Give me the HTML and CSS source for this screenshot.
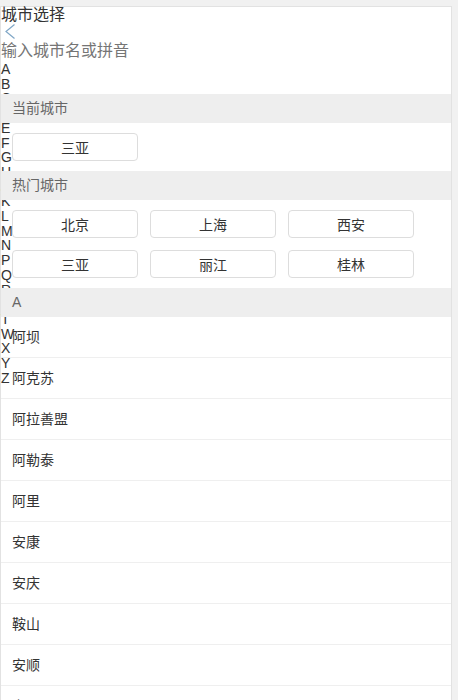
FILE: index.html
```html
<!DOCTYPE html>
<html lang="zh-CN">
<head>
  <meta charset="UTF-8">
  <title>城市选择</title>
  <link rel="stylesheet" href="styles.css">
</head>
<body>
  <div class="page">
    <div class="top">
      <div class="title">城市选择</div>
      <a class="back" href="#">
        <svg width="16" height="17" viewBox="0 0 16 17">
          <polyline points="13.5,1.5 5,8.5 13.5,15.5" fill="none" stroke="#7fa6c6" stroke-width="1.2"/>
        </svg>
      </a>
      <input class="search" type="text" placeholder="输入城市名或拼音">

      <!-- letter index -->
      <ul class="index">
        <li>A</li><li>B</li><li>C</li><li>D</li><li>E</li><li>F</li><li>G</li>
        <li>H</li><li>J</li><li>K</li><li>L</li><li>M</li><li>N</li><li>P</li>
        <li>Q</li><li>R</li><li>S</li><li>T</li><li>W</li><li>X</li><li>Y</li>
        <li>Z</li>
      </ul>
    </div>

    <div class="section-title">当前城市</div>
    <div class="btn-grid">
      <button type="button" class="city-btn">三亚</button>
    </div>

    <div class="section-title">热门城市</div>
    <div class="btn-grid">
      <button type="button" class="city-btn">北京</button>
      <button type="button" class="city-btn">上海</button>
      <button type="button" class="city-btn">西安</button>
      <button type="button" class="city-btn">三亚</button>
      <button type="button" class="city-btn">丽江</button>
      <button type="button" class="city-btn">桂林</button>
    </div>

    <div class="section-title">A</div>
    <ul class="city-list">
      <li>阿坝</li>
      <li>阿克苏</li>
      <li>阿拉善盟</li>
      <li>阿勒泰</li>
      <li>阿里</li>
      <li>安康</li>
      <li>安庆</li>
      <li>鞍山</li>
      <li>安顺</li>
      <li>安阳</li>
      <li>澳门</li>
    </ul>
  </div>
</body>
</html>
```

FILE: styles.css
```css
/* Base */
body {
  margin: 0;
  padding: 6px 6px 0 0;
  background: #f1f1f1;
  font-family: 'Liberation Sans', 'Noto Sans CJK SC', sans-serif;
  color: #333;
}

ul {
  margin: 0;
  padding: 0;
  list-style: none;
}

.page {
  background: #fff;
  border: 1px solid #e2e2e2;
  border-bottom: none;
}

/* Header */
.top {
  padding-bottom: 32px;
}

.title {
  font-size: 16px;
  line-height: 16px;
  color: #333;
}

.back {
  display: block;
  height: 17px;
}

.back svg {
  display: block;
  margin-left: 0;
}

.search {
  display: block;
  width: 100%;
  height: 22px;
  margin: 0;
  padding: 0;
  border: none;
  outline: none;
  background: transparent;
  font-family: inherit;
  font-size: 16px;
  color: #333;
}

.search::placeholder {
  color: #757575;
}

/* Letter index, drawn under the section bars */
.index {
  position: absolute;
  font-size: 14px;
  line-height: 14.7px;
  color: #333;
}

/* Sections */
.section-title {
  position: relative;
  height: 29px;
  line-height: 29px;
  padding: 0 11px;
  background: #eee;
  color: #666;
  font-size: 14px;
}

.btn-grid {
  display: grid;
  grid-template-columns: repeat(3, 126px);
  gap: 12px;
  padding: 10px 11px;
}

.city-btn {
  height: 28px;
  padding: 0;
  border: 1px solid #ddd;
  border-radius: 4px;
  background: #fff;
  font-family: inherit;
  font-size: 14px;
  color: #333;
}

/* City list */
.city-list li {
  height: 40px;
  line-height: 40px;
  padding-left: 11px;
  border-bottom: 1px solid #efefef;
  font-size: 14px;
  color: #333;
}
```
